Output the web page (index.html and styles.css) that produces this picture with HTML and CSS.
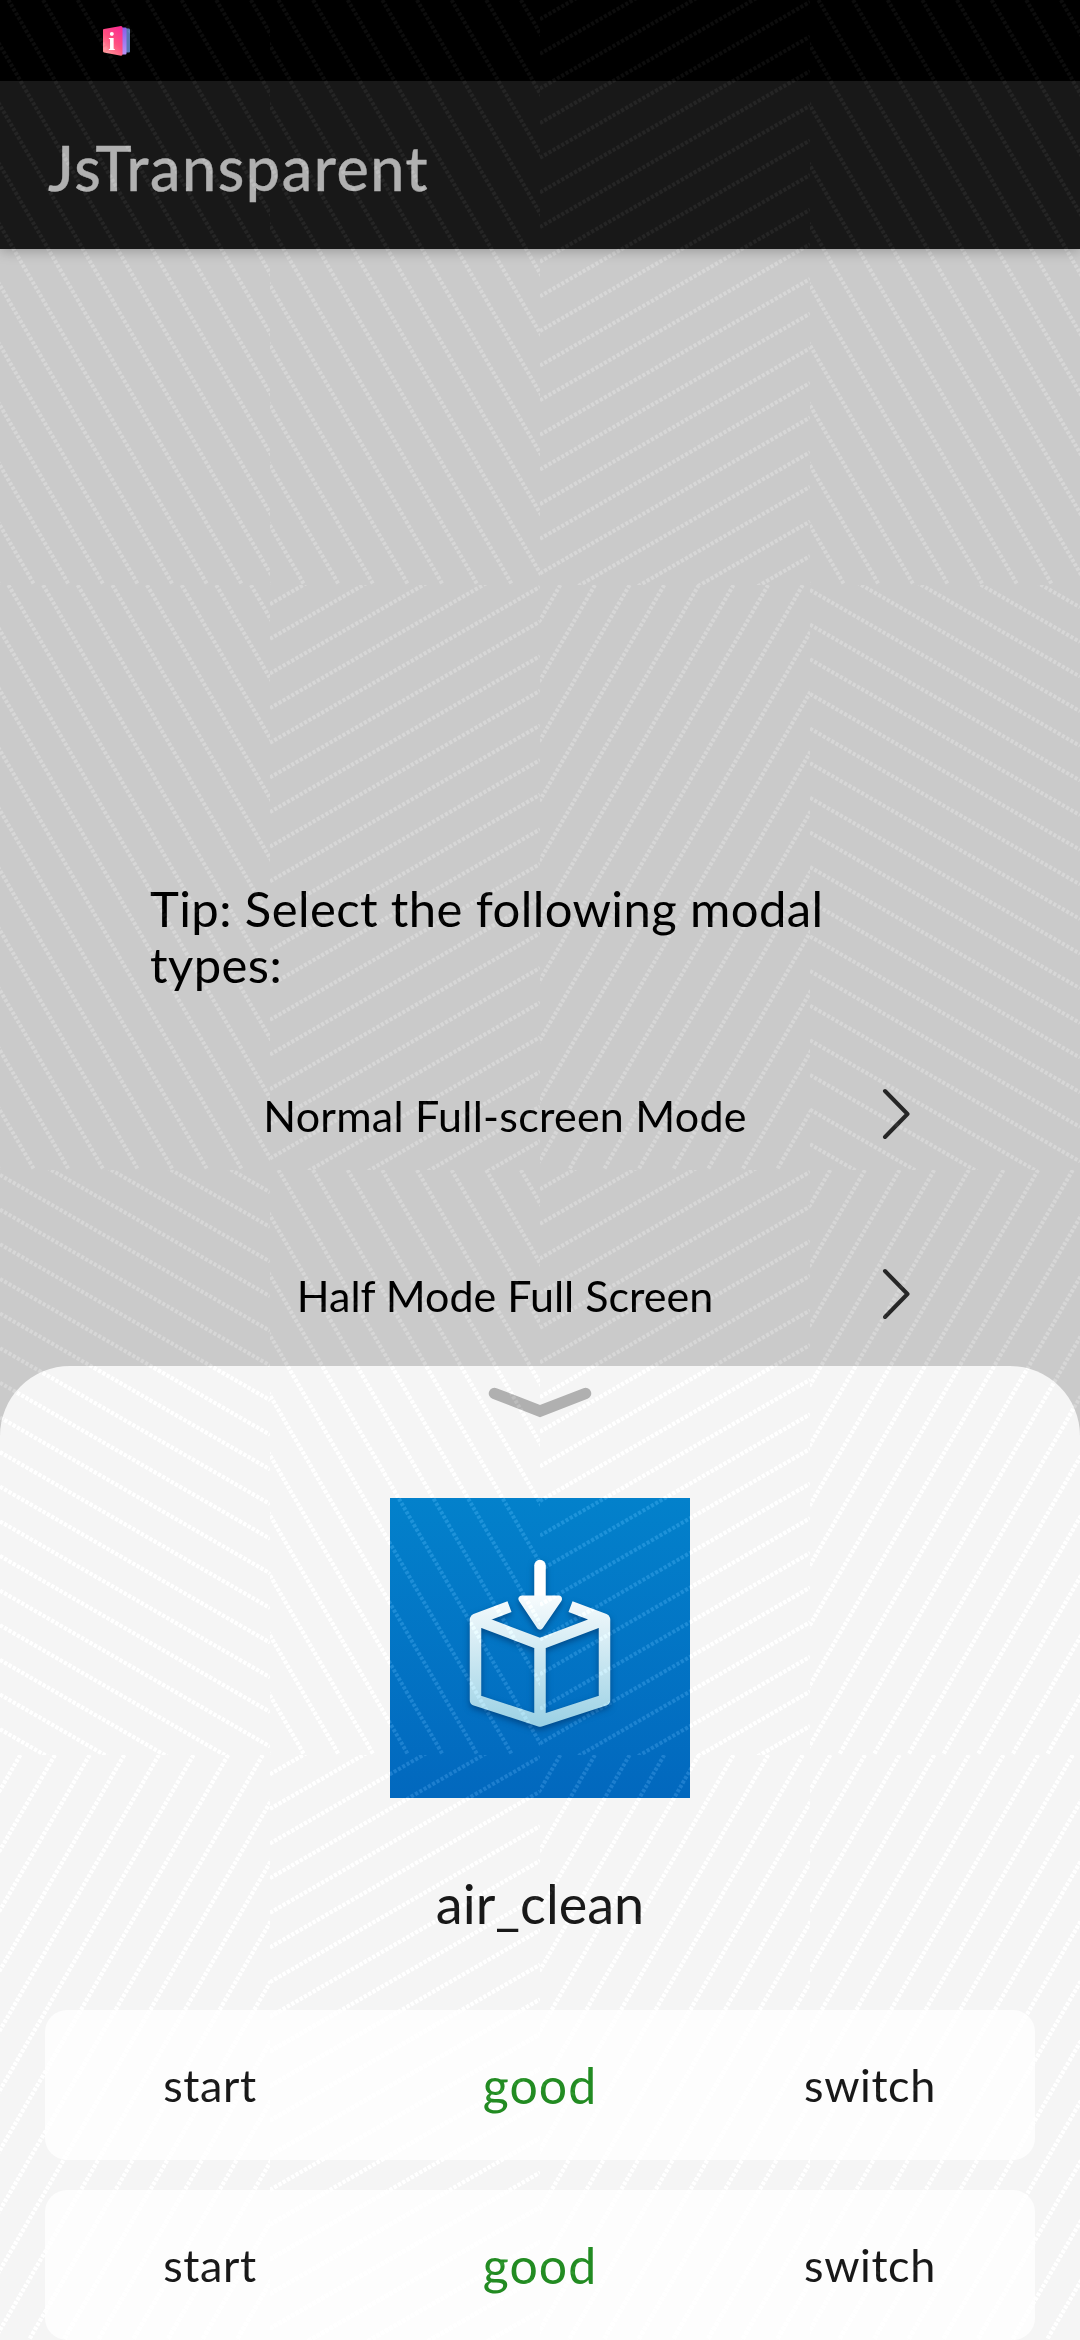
FILE: index.html
```html
<!DOCTYPE html>
<html lang="en">
<head>
<meta charset="utf-8">
<title>JsTransparent</title>
<link rel="stylesheet" href="styles.css">
</head>
<body>
<div class="screen">
  <div class="status-bar">
    <svg class="status-icon" width="28" height="32" viewBox="0 0 28 32">
      <defs>
        <linearGradient id="book" x1="0.8" y1="0" x2="0.2" y2="1"><stop offset="0" stop-color="#fb2c92"/><stop offset="0.5" stop-color="#ff4f7f"/><stop offset="1" stop-color="#ff9a9a"/></linearGradient>
        <linearGradient id="page" x1="0" y1="0" x2="0" y2="1"><stop offset="0" stop-color="#8560e8"/><stop offset="1" stop-color="#b993f5"/></linearGradient>
      </defs>
      <path d="M20 3.500h7q1 0 1 1v22q0 1-1 1h-7z" fill="#5878b4"/>
      <path d="M16 2.500h7.500q1 0 1 1v25q0 1-1 1h-7.500z" fill="url(#page)"/>
      <path d="M2 4L19 1Q20.500 1 20.500 2.500V29Q20.500 31 19 30.800L2 27.500Q1 27 1 26V5Q1 4 2 4z" fill="url(#book)"/>
      <text x="6.200" y="24.500" class="book-letter">i</text>
    </svg>
  </div>
  <header class="title-bar"><h1>JsTransparent</h1></header>
  <main class="content">
    <p class="tip">Tip: Select the following modal<br>types:</p>
    <div class="mode"><span class="mode-name normal">Normal Full-screen Mode</span>
      <svg class="arrow" width="28" height="52" viewBox="0 0 28 52"><path d="M3 3L25.500 26L3 49"/></svg></div>
    <div class="mode"><span class="mode-name half">Half Mode Full Screen</span>
      <svg class="arrow" width="28" height="52" viewBox="0 0 28 52"><path d="M3 3L25.500 26L3 49"/></svg></div>
  </main>
  <section class="sheet">
    <svg class="handle" width="104" height="34" viewBox="0 0 104 34"><path d="M6.500 7.500L52 25L97.500 7.500"/></svg>
    <svg class="app-icon" width="300" height="300" viewBox="0 0 300 300">
      <defs>
        <linearGradient id="tile" x1="0" y1="0" x2="0" y2="1"><stop offset="0" stop-color="#0381cb"/><stop offset="1" stop-color="#0268be"/></linearGradient>
        <linearGradient id="glyph" gradientUnits="userSpaceOnUse" x1="0" y1="62" x2="0" y2="230"><stop offset="0.150" stop-color="#fff"/><stop offset="1" stop-color="#99d0e4"/></linearGradient>
      </defs>
      <rect width="300" height="300" fill="url(#tile)"/>
      <use href="#lines" x="-390" y="-1498" class="icon-lines"/>
      <g class="glyph">
        <path d="M119.500 108.700L85.500 121.500L150 146L214.500 121.500L180.500 108.700M85.500 121.500V202L150 223L214.500 202V121.500M150 146V223" fill="none" stroke="url(#glyph)" stroke-width="11.500" stroke-linejoin="round"/>
        <path d="M150 67.500V100" fill="none" stroke="#fff" stroke-width="11.500" stroke-linecap="round"/>
        <path d="M132 101H168.500L150 128z" fill="url(#glyph)" stroke="url(#glyph)" stroke-width="7" stroke-linejoin="round"/>
      </g>
    </svg>
    <h2>air_clean</h2>
    <div class="card"><span class="start">start</span><span class="good">good</span><span class="switch">switch</span></div>
    <div class="card"><span class="start">start</span><span class="good">good</span><span class="switch">switch</span></div>
  </section>
  <svg class="watermark" width="1080" height="2340" viewBox="0 0 1080 2340">
    <defs>
      <symbol id="a" width="270" height="585" viewBox="0 0 270 585"><path d="M-338 0l337.800 585m-303.160-585l337.800 585m-303.160-585l337.800 585m-303.160-585l337.800 585m-303.160-585l337.800 585m-303.160-585l337.800 585m-303.160-585l337.800 585m-303.160-585l337.800 585m-303.160-585l337.800 585m-303.160-585l337.800 585m-303.160-585l337.800 585m-303.160-585l337.800 585m-303.160-585l337.800 585m-303.160-585l337.800 585m-303.160-585l337.800 585m-303.160-585l337.800 585m-303.160-585l337.800 585m-303.160-585l337.800 585"/></symbol>
      <symbol id="b" width="270" height="585" viewBox="0 0 270 585"><path d="M0 19.200l270-155.900m-270 190.540l270-155.900m-270 190.540l270-155.900m-270 190.540l270-155.900m-270 190.540l270-155.900m-270 190.540l270-155.900m-270 190.540l270-155.900m-270 190.540l270-155.900m-270 190.540l270-155.900m-270 190.540l270-155.900m-270 190.540l270-155.900m-270 190.540l270-155.900m-270 190.540l270-155.900m-270 190.540l270-155.900m-270 190.540l270-155.900m-270 190.540l270-155.900m-270 190.540l270-155.900m-270 190.540l270-155.900m-270 190.540l270-155.900m-270 190.540l270-155.900m-270 190.540l270-155.900m-270 190.540l270-155.900"/></symbol>
      <symbol id="c" width="270" height="585" viewBox="0 0 270 585"><path d="M0-133.600l270 155.900m-270-121.260l270 155.900m-270-121.260l270 155.900m-270-121.260l270 155.900m-270-121.260l270 155.900m-270-121.260l270 155.900m-270-121.260l270 155.900m-270-121.260l270 155.900m-270-121.260l270 155.900m-270-121.260l270 155.900m-270-121.260l270 155.900m-270-121.260l270 155.900m-270-121.260l270 155.900m-270-121.260l270 155.900m-270-121.260l270 155.900m-270-121.260l270 155.900m-270-121.260l270 155.900m-270-121.260l270 155.900m-270-121.260l270 155.900m-270-121.260l270 155.900m-270-121.260l270 155.900"/></symbol>
      <symbol id="d" width="270" height="585" viewBox="0 0 270 585"><path d="M20.300 0l-337.800 585m372.440-585l-337.800 585m372.440-585l-337.800 585m372.440-585l-337.800 585m372.440-585l-337.800 585m372.440-585l-337.800 585m372.440-585l-337.800 585m372.440-585l-337.800 585m372.440-585l-337.800 585m372.440-585l-337.800 585m372.440-585l-337.800 585m372.440-585l-337.800 585m372.440-585l-337.800 585m372.440-585l-337.800 585m372.440-585l-337.800 585m372.440-585l-337.800 585m372.440-585l-337.800 585m372.440-585l-337.800 585"/></symbol>
    </defs>
    <g id="lines">
      <use href="#a"/><use href="#a" x="270"/><use href="#b" x="540"/><use href="#a" x="810"/>
      <use href="#a" y="585"/><use href="#b" x="270" y="585"/><use href="#d" x="540" y="585"/><use href="#c" x="810" y="585"/>
      <use href="#c" y="1170"/><use href="#a" x="270" y="1170"/><use href="#b" x="540" y="1170"/><use href="#d" x="810" y="1170"/>
      <use href="#d" y="1755"/><use href="#b" x="270" y="1755"/><use href="#d" x="540" y="1755"/><use href="#d" x="810" y="1755"/>
    </g>
  </svg>
</div>
</body>
</html>
```
FILE: styles.css
```css
* { box-sizing: border-box; margin: 0; }
body { background: #cacaca; font-family: Lato, "Noto Sans", sans-serif; }
h1, h2 { font-weight: 400; }
.screen {
  position: relative;
  isolation: isolate;
  width: 1080px;
  height: 2340px;
  overflow: hidden;
  display: flex;
  flex-direction: column;
  background: #cacaca;
}
.status-bar { height: 81px; background: #000; padding: 25px 0 0 102px; flex: none; }
.status-icon { display: block; }
.book-letter { font: bold 25px "Liberation Serif", serif; fill: #fff; }
.title-bar {
  height: 168px;
  flex: none;
  display: flex;
  align-items: center;
  padding: 6px 48px 0;
  background: #181818;
  box-shadow: 0 2px 12px rgba(0, 0, 0, 0.25);
}
h1 { font-size: 61px; line-height: 80px; font-weight: 500; letter-spacing: 1.55px; color: #b0b0b0; white-space: nowrap; -webkit-text-stroke: 0.4px #b0b0b0; }
.content { height: 1117px; flex: none; padding: 631px 150px 0; color: #000; }
.tip { font-size: 49px; line-height: 56px; letter-spacing: 0.4px; white-space: nowrap; margin-bottom: 32px; }
.mode { height: 180px; display: flex; align-items: center; }
.mode-name { width: 710px; text-align: center; font-size: 43px; line-height: 52px; white-space: nowrap; padding-top: 3px; }
.normal { letter-spacing: 0.25px; }
.arrow { margin-left: 22px; flex: none; fill: none; stroke: #262626; stroke-width: 4; stroke-linecap: round; stroke-linejoin: round; }
.sheet {
  height: 974px;
  flex: none;
  display: flex;
  flex-direction: column;
  align-items: center;
  padding: 20px 45px 0;
  border-radius: 70px 70px 0 0;
  background: #f5f5f5;
  color: #181818;
}
.handle { flex: none; fill: none; stroke: #b0b0b0; stroke-width: 11.5; stroke-linecap: round; }
.app-icon { flex: none; margin-top: 78px; overflow: hidden; }
.glyph { filter: drop-shadow(0 3px 3px rgba(0, 40, 90, 0.55)); }
h2 { font-size: 54px; line-height: 70px; margin: 71px 0; white-space: nowrap; }
.card {
  width: 990px;
  height: 150px;
  flex: none;
  margin-bottom: 30px;
  display: grid;
  grid-template-columns: repeat(3, 1fr);
  justify-items: center;
  align-items: start;
  border-radius: 22px;
  background: #fdfdfd;
  font-size: 45px;
  line-height: 60px;
  letter-spacing: 0.6px;
  padding-top: 45px;
}
.good { font-size: 50px; letter-spacing: 1px; color: #228b22; }
.watermark { position: absolute; inset: 0; pointer-events: none; mix-blend-mode: plus-lighter; color: #0d0d0d; }
.icon-lines { color: rgba(255, 255, 255, 0.06); }
#a path, #b path, #c path, #d path { fill: none; stroke: currentColor; stroke-width: 4; stroke-dasharray: 3.2 1.73; }
```
